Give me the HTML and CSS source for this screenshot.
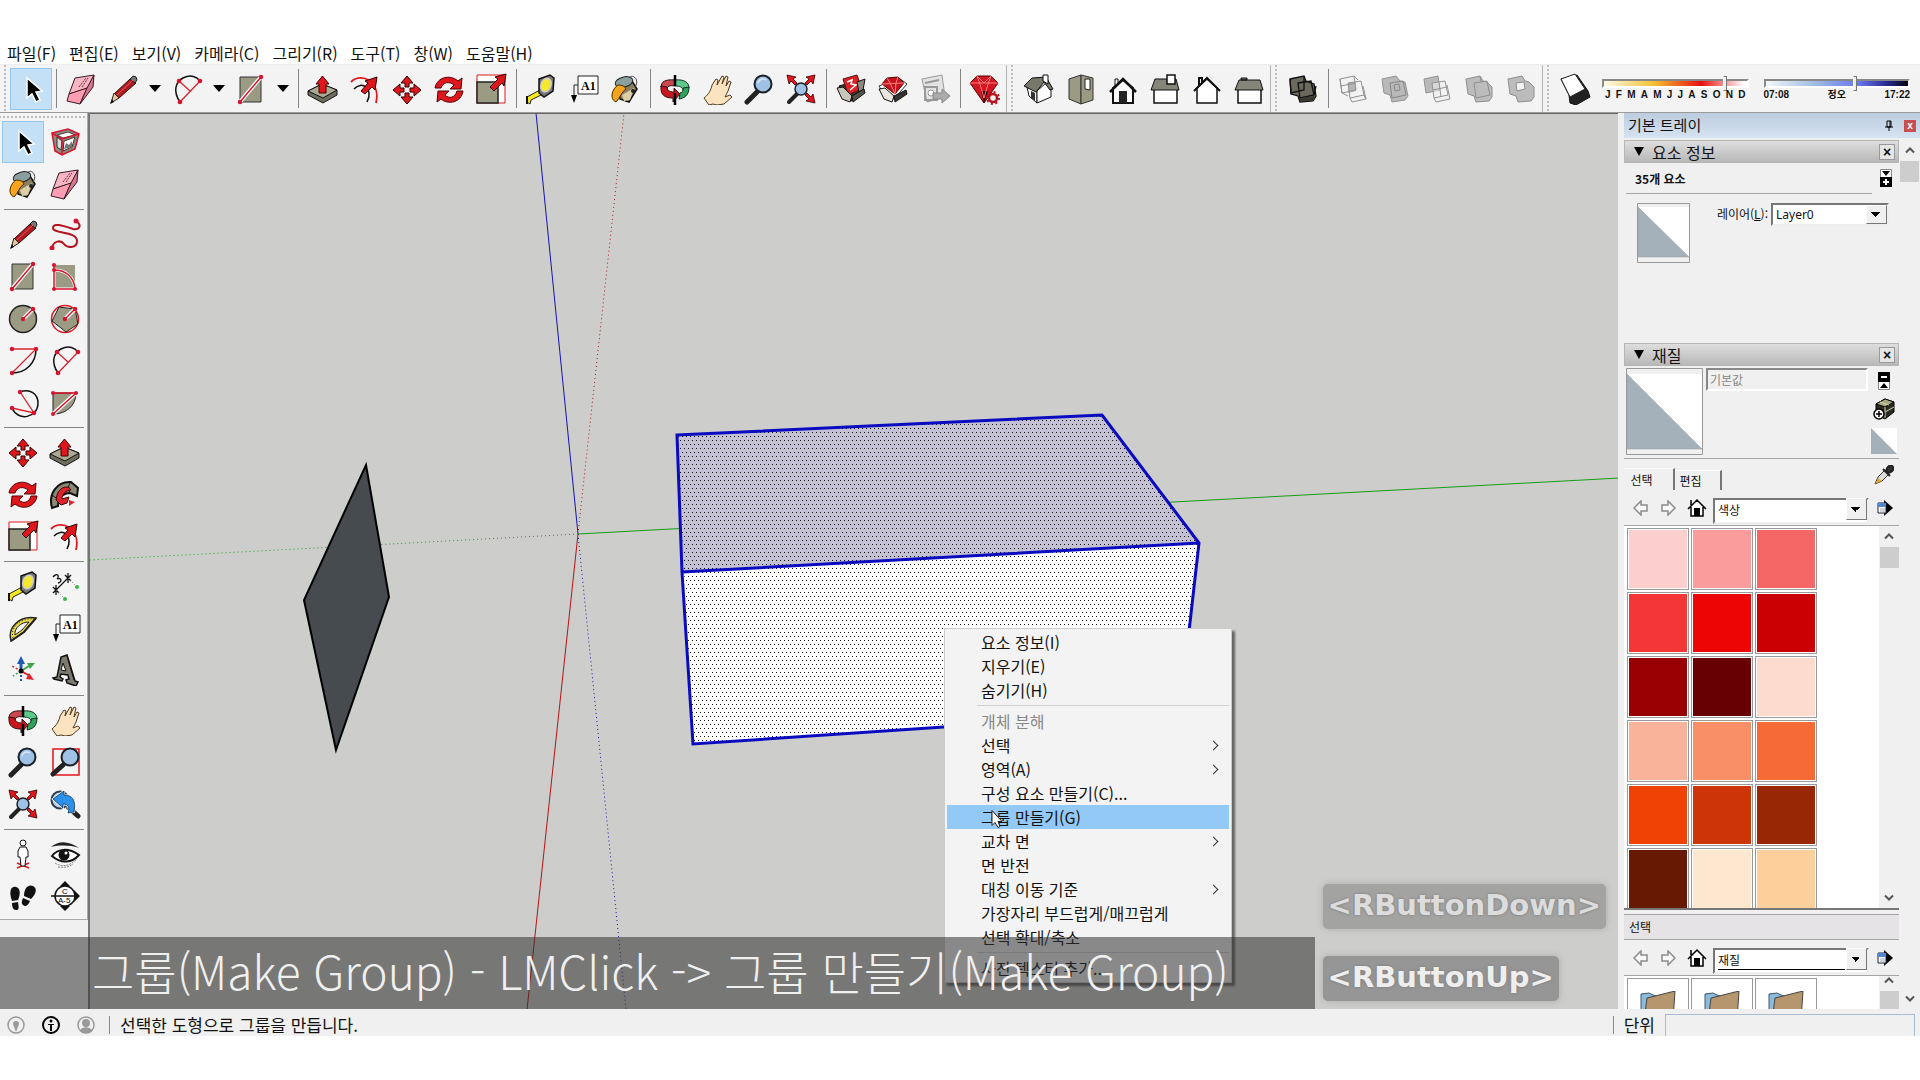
FILE: index.html
```html
<!DOCTYPE html>
<html lang="ko">
<head>
    <meta charset="UTF-8">
    <meta name="viewport" content="width=device-width, initial-scale=1.0">
    <title>SketchUp</title>
    <link rel="stylesheet" href="styles.css">
</head>
<body>
    <!-- Icon sprite -->
    <svg class="sprite" aria-hidden="true">
        <symbol id="i-select" viewBox="0 0 32 32">
            <path d="M12 5v20l5-4 4 8 4-2-4-8 6-1z" fill="#000" stroke="#fff" stroke-width="1.5"/>
        </symbol>
        <symbol id="i-eraser" viewBox="0 0 32 32">
            <path d="M10 5l19-3-6 13-19 6z" fill="#f8b5c4" stroke="#3a1a22"/>
            <path d="M4 21l18-6-7 16-13-3z" fill="#ff9db4" stroke="#3a1a22"/>
            <path d="M29 2l-1 12-13 17 7-16z" fill="#d8768c" stroke="#3a1a22"/>
            <path d="M14 14l7-9M17 14l6-9" stroke="#6d2c3c" stroke-dasharray="2 1"/>
        </symbol>
        <symbol id="i-pencil" viewBox="0 0 32 32">
            <path d="M23 6l6 4L12 25l-5-4z" fill="#b01c22" stroke="#2a0a0a"/>
            <path d="M23 6l3-3q4 0 4 4l-2 3z" fill="#777" stroke="#222"/>
            <path d="M7 20l5 5-8 5z" fill="#e9c79a" stroke="#222"/>
            <path d="M5 26l-2 5 4-2z" fill="#111"/>
            <path d="M10 22L26 7" stroke="#ea5a5a"/>
        </symbol>
        <symbol id="i-arc2" viewBox="0 0 32 32">
            <path d="M9 29C2 19 4 9 12 5s14-1 17 3" fill="none" stroke="#111" stroke-width="1.5"/>
            <path d="M9 29L29 8M8 8l11 10" stroke="#d8232e" stroke-width="1.3"/>
            <g fill="#d8132e"><circle cx="9" cy="29" r="2.3"/><circle cx="29" cy="8" r="2.3"/><circle cx="8" cy="8" r="2.3"/></g>
        </symbol>
        <symbol id="i-rect" viewBox="0 0 32 32">
            <path d="M5 4h21v25H5z" fill="#9b9b84" stroke="#333"/>
            <path d="M5 29L26 4" stroke="#fff" stroke-width="4"/>
            <path d="M5 29L26 4" stroke="#d8132e" stroke-width="1.5"/>
            <g fill="#d8132e"><circle cx="5" cy="29" r="2.2"/><circle cx="26" cy="4" r="2.2"/></g>
        </symbol>
        <symbol id="i-pushpull" viewBox="0 0 32 32">
            <path d="M1 18l14-7 15 6v5L16 30 1 22z" fill="#6e6e5c" stroke="#111"/>
            <path d="M1 18l14-7 15 6-14 8z" fill="#a9a994" stroke="#111"/>
            <path d="M12 20v-9H9l6.500-8 6.500 8h-3v9z" fill="#e0161d" stroke="#400"/>
        </symbol>
        <symbol id="i-offset" viewBox="0 0 32 32">
            <path d="M2 9C12-1 32 8 27 30" fill="none" stroke="#e0161d" stroke-width="1.800"/>
            <path d="M5 16c8-9 20 0 13 13" fill="none" stroke="#111" stroke-width="1.500"/>
            <path d="M12 18l7-8-3-2 12-4-2 13-3-3-7 7z" fill="#e0161d" stroke="#300"/>
        </symbol>
        <symbol id="i-move" viewBox="0 0 32 32">
            <g fill="#e0161d" stroke="#300">
                <path id="mv" d="M14 14v-4h-4l6-7 6 7h-4v4z"/>
                <use href="#mv" transform="rotate(90 16 17)"/>
                <use href="#mv" transform="rotate(180 16 17)"/>
                <use href="#mv" transform="rotate(270 16 17)"/>
            </g>
        </symbol>
        <symbol id="i-rotate" viewBox="0 0 32 32">
            <g fill="#e0161d" stroke="#500">
                <path d="M2 15C4 4 17 1 25 8l4-3-1 11H17l4-4c-5-4-11-3-13 3z"/>
                <path d="M30 18C28 30 15 32 8 26l-4 3 1-11h11l-4 4c4 4 10 3 12-4z"/>
            </g>
        </symbol>
        <symbol id="i-scale" viewBox="0 0 32 32">
            <path d="M2 2h28v28H2z" fill="#fff" stroke="#e0161d"/>
            <path d="M2 9h21v21H2z" fill="#9b9b84" stroke="#222" stroke-width="1.500"/>
            <path d="M15 14l8-8-3-2 11-3-2 12-2-3-8 8z" fill="#e0161d" stroke="#300"/>
        </symbol>
        <symbol id="i-tape" viewBox="0 0 32 32">
            <path d="M2 24l13-7 3 4-12 6-1 4-3-2z" fill="#f7ea1c" stroke="#222"/>
            <path d="M14 6l11-4 4 3-1 13-9 6-5-4z" fill="#777" stroke="#111" stroke-width="1.500"/>
            <ellipse cx="21" cy="12" rx="5" ry="7" fill="#f4e92a" stroke="#ccc" stroke-width="1.500" transform="rotate(20 21 12)"/>
            <path d="M2 23v8" stroke="#111" stroke-width="2"/>
        </symbol>
        <symbol id="i-text" viewBox="0 0 32 32">
            <path d="M11 3h20v18H11z" fill="#fff" stroke="#222"/>
            <path d="M11 12H7v12" fill="none" stroke="#222"/>
            <path d="M4 22h6l-3 8z" fill="#000"/>
            <text x="14" y="17" class="icon-text">A1</text>
        </symbol>
        <symbol id="i-paint" viewBox="0 0 32 32">
            <path d="M9 7l14 1 5 8-8 13-9-3z" fill="#8b7f62" stroke="#111" stroke-width="1.500"/>
            <path d="M13 22l12-7-4 12-6 1z" fill="#dccfa6"/>
            <path d="M20 5c4-5 11 2 6 9" fill="none" stroke="#444"/>
            <ellipse cx="15" cy="9" rx="9" ry="5" fill="#8ba09e" stroke="#222" transform="rotate(-15 15 9)"/>
            <path d="M9 12c4 0 7 1 8 4-5 3-5 8-10 13-7-3-4-13 2-17z" fill="#f6a41c" stroke="#4b2e00"/>
            <circle cx="24" cy="18" r="2" fill="#222"/>
        </symbol>
        <symbol id="i-orbit" viewBox="0 0 32 32">
            <path d="M16 7C6 6 2 9 2 14l6 3c0-4 3-5 8-4z" fill="#c84a4e" stroke="#311"/>
            <path d="M16 7c10-1 14 3 14 8l-6 3c0-4-3-5-8-5z" fill="#5cc98a" stroke="#132"/>
            <path d="M2 13c-1 10 5 12 12 12v4l7-8-6-6v4c-5 0-7-2-7-5z" fill="#c8161e" stroke="#311"/>
            <path d="M30 14c0 9-5 11-10 12l1-6c3-1 4-3 3-5z" fill="#2fa35c" stroke="#132"/>
            <path d="M16 2v11M16 20v12" stroke="#000" stroke-width="2.500"/>
        </symbol>
        <symbol id="i-pan" viewBox="0 0 32 32">
            <path d="M3 25c5-4 7-8 8-13l4-6 2 1-1 5 5-9 2 1-2 7 4-8 2 1-2 9 3-5 2 1-3 9-3 6 5-2 2 2-8 7-7 1-4-1-4 1z" fill="#fbe3bf" stroke="#4e3a20" stroke-linejoin="round"/>
        </symbol>
        <symbol id="i-zoom" viewBox="0 0 32 32">
            <path d="M4 29l10-10" stroke="#222" stroke-width="5" stroke-linecap="round"/>
            <circle cx="20" cy="11" r="8.500" fill="#9fc1e6" stroke="#1b1f26" stroke-width="2"/>
            <path d="M15 10c1-4 5-5 8-3" fill="none" stroke="#d9e9fa" stroke-width="1.500"/>
        </symbol>
        <symbol id="i-zoomwin" viewBox="0 0 32 32">
            <path d="M4 3h26v26H4z" fill="none" stroke="#e0161d" stroke-width="1.500"/>
            <path d="M4 28l10-9" stroke="#222" stroke-width="5" stroke-linecap="round"/>
            <circle cx="21" cy="11" r="8.500" fill="#9fc1e6" stroke="#1b1f26" stroke-width="2"/>
        </symbol>
        <symbol id="i-extents" viewBox="0 0 32 32">
            <path d="M4 29l8-8" stroke="#222" stroke-width="4" stroke-linecap="round"/>
            <circle cx="16" cy="16" r="6" fill="#9fc1e6" stroke="#1b1f26" stroke-width="1.500"/>
            <g fill="#e0161d" stroke="#300" stroke-width=".8">
                <path d="M2 2l9 2-3 2 4 4-2 2-4-4-2 3z"/>
                <path d="M30 2l-9 2 3 2-4 4 2 2 4-4 2 3z"/>
                <path d="M30 30l-9-2 3-2-4-4 2-2 4 4 2-3z"/>
            </g>
        </symbol>
        <symbol id="i-prev" viewBox="0 0 32 32">
            <path d="M20 20l9 8" stroke="#222" stroke-width="5" stroke-linecap="round"/>
            <circle cx="11" cy="12" r="8.500" fill="#c3d3e2" stroke="#2b3e56" stroke-width="2"/>
            <path d="M4 11l11-8v4c9 0 12 6 10 17l-6 1c2-6 0-9-5-9v4z" fill="#2c8fe8" stroke="#fff" stroke-width="2"/>
            <path d="M4 11l11-8v4c9 0 12 6 10 17l-6 1c2-6 0-9-5-9v4z" fill="#2c8fe8" stroke="#0d365f" stroke-width=".8"/>
        </symbol>
        <symbol id="i-box-red" viewBox="0 0 32 32">
            <path d="M4 13l17-5 8 9-12 11-9-3z" fill="#3d3a34" stroke="#111"/>
            <path d="M8 6l14-4 5 14-14 6z" fill="#dd2226" stroke="#511"/>
            <path d="M12 9l5-2-1 4 5 1-6 5" fill="none" stroke="#fff" stroke-width="1.500"/>
            <path d="M22 9l8-3-2 11-4 2z" fill="#8d897e" stroke="#111"/>
            <path d="M2 15l6-1 9 9-2 6-8-3z" fill="#c9c5ba" stroke="#111"/>
            <path d="M17 23l12-7 1 4-12 9z" fill="#55524a" stroke="#111"/>
        </symbol>
        <symbol id="i-box-gem" viewBox="0 0 32 32">
            <path d="M2 13l20-8 8 6-13 15-9-3z" fill="#fff" stroke="#333"/>
            <path d="M5 11l5-6 11-1 6 6-9 11z" fill="#c5121b" stroke="#500"/>
            <path d="M5 11l22-1M10 5l3 5 5 11M21 4l-2 6-1 11" fill="none" stroke="#ff8083"/>
            <path d="M2 16l6-1 9 8-2 6-8-3z" fill="#e8e5df" stroke="#111"/>
            <path d="M17 23l12-6 1 4-12 8z" fill="#37342f" stroke="#111"/>
        </symbol>
        <symbol id="i-layout" viewBox="0 0 32 32">
            <path d="M3 6l20-4 3 22-18 5z" fill="#e3e3e3" stroke="#9a9a9a"/>
            <path d="M6 10l14-3M6 14h12v13H6z" fill="none" stroke="#9a9a9a" stroke-width="2"/>
            <circle cx="12" cy="20" r="3" fill="#fff" stroke="#9a9a9a"/>
            <path d="M14 20h9v-4l8 7-8 7v-4h-9z" fill="#ababab" stroke="#888"/>
        </symbol>
        <symbol id="i-ruby" viewBox="0 0 32 32">
            <path d="M1 10l7-7h14l7 7-14 20z" fill="#d3161f" stroke="#500"/>
            <path d="M15 30l-3-12h7z" fill="#3a0206"/>
            <path d="M1 10h28M8 3l3 8 4 14M22 3l-3 8-4 14M8 3l7 7 7-7" fill="none" stroke="#ff7d80"/>
            <circle cx="24" cy="25" r="4" fill="#f3f3f3" stroke="#b5121c" stroke-width="2.500"/>
            <circle cx="24" cy="25" r="6" fill="none" stroke="#b5121c" stroke-width="2" stroke-dasharray="2 2.700"/>
        </symbol>
        <symbol id="i-iso" viewBox="0 0 32 32">
            <path d="M4 14l10 2v14l-8-7z" fill="#fff" stroke="#111"/>
            <path d="M14 18l9-8 5 5v9l-14 6z" fill="#fff" stroke="#111"/>
            <path d="M1 13L9 5l14-1 7 12-3 1-6-8-8 10z" fill="#77776a" stroke="#111"/>
            <path d="M8 18l4 2v8l-4-3z" fill="#333"/>
            <path d="M20 2h5v9l-5-3z" fill="#fff" stroke="#111"/>
        </symbol>
        <symbol id="i-top" viewBox="0 0 32 32">
            <path d="M4 6l12-4v29L4 26z" fill="#9b9b84" stroke="#333"/>
            <path d="M16 2l12 3v22l-12 4z" fill="#9b9b84" stroke="#333"/>
            <path d="M20 6h5v11l-5-1z" fill="#fff" stroke="#222"/>
        </symbol>
        <symbol id="i-front" viewBox="0 0 32 32">
            <path d="M8 6h3v7H8z" fill="#fff" stroke="#111"/>
            <path d="M6 15L16 7l10 8v15H6z" fill="#fff" stroke="#111" stroke-width="2"/>
            <path d="M3 19L16 6l13 13" fill="none" stroke="#111" stroke-width="2.500"/>
            <path d="M12 18h8v12h-8z" fill="#222"/>
        </symbol>
        <symbol id="i-right" viewBox="0 0 32 32">
            <path d="M5 16h23v14H5z" fill="#fff" stroke="#111" stroke-width="1.500"/>
            <path d="M6 6h21l3 11H2z" fill="#85857a" stroke="#111"/>
            <path d="M18 2h8v9h-8z" fill="#fff" stroke="#111" stroke-width="1.500"/>
        </symbol>
        <symbol id="i-back" viewBox="0 0 32 32">
            <path d="M6 15L16 6l10 9v15H6z" fill="#fff" stroke="#111" stroke-width="1.500"/>
            <path d="M3 18L16 5l13 13M8 13V5h3v5" fill="none" stroke="#111" stroke-width="2"/>
        </symbol>
        <symbol id="i-left" viewBox="0 0 32 32">
            <path d="M5 16h23v14H5z" fill="#fff" stroke="#111" stroke-width="1.500"/>
            <path d="M6 7h21l3 10H2zM8 5h6v2H8z" fill="#85857a" stroke="#111"/>
        </symbol>
        <symbol id="i-solid" viewBox="0 0 32 32">
            <path d="M3 6l14-3 2 5 8 3 2 12-3 5-13 1-2-6-7-2z" fill="#6c6a5c" stroke="#111" stroke-width="1.300"/>
            <path d="M3 6l1 14 13-3L17 3M11 10l13-2 3 14-14 3zM27 22l2-9" fill="none" stroke="#111" stroke-width="1.300"/>
            <path d="M13 25l14-2 1 4-15 2z" fill="#393830"/>
        </symbol>
        <symbol id="i-solid-a" viewBox="0 0 32 32">
            <path d="M11 10l8-1v9l-8 2z" fill="#b5b5b5"/>
            <path d="M3 6l14-3 2 14-14 3zM11 10l13-2 3 14-14 3zM13 25l2 4 14-3-2-4 2 4-3-13M3 6l2 14 6 3M17 3l4 4M4 13l14-3" fill="none" stroke="#929292"/>
        </symbol>
        <symbol id="i-solid-b" viewBox="0 0 32 32">
            <path d="M3 6l14-3 4 5 5 1 3 14-3 4-13 2-2-7-6-2z" fill="#b9b9b9" stroke="#929292"/>
            <path d="M11 10l13-2 3 14-14 3zM15 12l5-1 1 6-5 1z" fill="none" stroke="#888"/>
        </symbol>
        <symbol id="i-solid-c" viewBox="0 0 32 32">
            <path d="M3 6l14-3 2 14-14 3z" fill="#b9b9b9" stroke="#929292"/>
            <path d="M11 10l13-2 3 14-14 3zM13 25l2 4 14-3-3-14M12 17l14-3M18 9l2 15" fill="#efefef" fill-opacity=".6" stroke="#929292"/>
        </symbol>
        <symbol id="i-solid-d" viewBox="0 0 32 32">
            <path d="M3 6l14-3 3 5 4 1 5 5 0 10-3 4-13 1-2-6-6-2z" fill="#bcbcbc" stroke="#8e8e8e"/>
            <path d="M11 10l13-2 3 14-14 3zM17 3l1 6" fill="none" stroke="#8e8e8e"/>
        </symbol>
        <symbol id="i-solid-e" viewBox="0 0 32 32">
            <path d="M3 6l14-3 3 5 4 1 5 5 0 10-3 4-13 1-2-6-6-2z" fill="#bcbcbc" stroke="#8e8e8e"/>
            <path d="M11 10l8-1 1 7-8 2z" fill="#f3f3f3" stroke="#8e8e8e"/>
        </symbol>
        <symbol id="i-shadow" viewBox="0 0 32 32">
            <path d="M2 6l8 16 1 8 6 2 14-8-2-6-11-16z" fill="#222" stroke="#111"/>
            <path d="M2 6l14-5 10 15-15 8z" fill="#fff" stroke="#222"/>
        </symbol>
        <symbol id="i-component" viewBox="0 0 32 32">
            <path d="M3 7l16-4 11 5-4 15-13 6-7-4z" fill="#8c8c7c" stroke="#d8132e" stroke-width="1.500"/>
            <path d="M8 9l11-3 7 3-12 3z" fill="#fff" stroke="#444"/>
            <path d="M8 11l5 4-1 9-4-3z" fill="#ddd" stroke="#333"/>
            <path d="M15 15l11-4-3 10-9 4z" fill="#fff" stroke="#333"/>
            <path d="M15 23l2-6 3 2 3-4v6z" fill="#777"/>
            <path d="M3 7l10 6 17-5M13 13v16" fill="none" stroke="#d8132e" stroke-width="1.500"/>
        </symbol>
        <symbol id="i-free" viewBox="0 0 32 32">
            <path d="M27 3c6 4 4 9-3 8C15 8 4 4 4 10c0 6 24 3 24 13 0 8-10 7-13 3s-11-4-12 5" fill="none" stroke="#b3131c" stroke-width="2"/>
            <g fill="#d8132e"><circle cx="27" cy="3" r="2.500"/><circle cx="3" cy="30" r="2.500"/></g>
        </symbol>
        <symbol id="i-rotrect" viewBox="0 0 32 32">
            <path d="M6 5h20v24H6z" fill="#9b9b84"/>
            <path d="M5 10c12 0 20 7 21 19H5z" fill="#9b9b84" stroke="#fff" stroke-width="3"/>
            <path d="M5 4v25h21c-1-12-9-19-21-19" fill="none" stroke="#d8132e" stroke-width="1.500"/>
            <g fill="#d8132e"><circle cx="5" cy="5" r="2"/><circle cx="5" cy="10" r="2"/><circle cx="5" cy="29" r="2"/><circle cx="26" cy="29" r="2"/></g>
        </symbol>
        <symbol id="i-circle" viewBox="0 0 32 32">
            <circle cx="16" cy="17" r="13.500" fill="#9b9b84" stroke="#222" stroke-width="1.500"/>
            <path d="M16 17L26 7" stroke="#fff" stroke-width="4"/>
            <path d="M16 17L26 7" stroke="#d8132e" stroke-width="1.500"/>
            <g fill="#d8132e"><circle cx="16" cy="17" r="2.200"/><circle cx="26" cy="7" r="2.200"/></g>
        </symbol>
        <symbol id="i-polygon" viewBox="0 0 32 32">
            <circle cx="16" cy="17" r="13.500" fill="#fff" stroke="#e0161d" stroke-width="1.500"/>
            <path d="M10 5l16 2 3 15-12 8L3 19z" fill="#9b9b84" stroke="#222"/>
            <path d="M16 17L26 7" stroke="#fff" stroke-width="4"/>
            <path d="M16 17L26 7" stroke="#d8132e" stroke-width="1.500"/>
            <g fill="#d8132e"><circle cx="16" cy="17" r="2.200"/><circle cx="26" cy="7" r="2.200"/></g>
        </symbol>
        <symbol id="i-arc" viewBox="0 0 32 32">
            <path d="M29 5c0 14-10 24-24 24" fill="none" stroke="#111" stroke-width="1.500"/>
            <path d="M5 5h24L5 29" fill="none" stroke="#d8232e" stroke-width="1.300"/>
            <g fill="#d8132e"><circle cx="5" cy="5" r="2.200"/><circle cx="29" cy="5" r="2.200"/><circle cx="5" cy="29" r="2.200"/></g>
        </symbol>
        <symbol id="i-arc3" viewBox="0 0 32 32">
            <path d="M13 6c10-4 18 2 18 11 0 15-20 19-26 5" fill="none" stroke="#111" stroke-width="1.500"/>
            <path d="M13 6l14 21L5 22" fill="none" stroke="#d8232e" stroke-width="1.300"/>
            <g fill="#d8132e"><circle cx="13" cy="6" r="2.200"/><circle cx="27" cy="27" r="2.200"/><circle cx="5" cy="22" r="2.200"/></g>
        </symbol>
        <symbol id="i-pie" viewBox="0 0 32 32">
            <path d="M4 7h23c0 12-9 21-23 21z" fill="#9b9b84" stroke="#222"/>
            <path d="M4 28L27 7" stroke="#fff" stroke-width="4"/>
            <path d="M4 7h23L4 28" fill="none" stroke="#d8132e" stroke-width="1.500"/>
            <g fill="#d8132e"><circle cx="4" cy="7" r="2"/><circle cx="27" cy="7" r="2"/><circle cx="4" cy="28" r="2"/></g>
        </symbol>
        <symbol id="i-follow" viewBox="0 0 32 32">
            <path d="M3 30C-1 16 8 3 22 4l7 6-1 8-7-3c-8 0-12 6-12 13z" fill="#8a8a7a" stroke="#111" stroke-width="2"/>
            <path d="M22 4c-3 3-3 7-1 11M3 17l7 5" fill="none" stroke="#111"/>
            <path d="M8 17c3-9 12-10 14-5-5 0-9 4-9 9l7-2-2 6-6 2-5-5z" fill="#e0242b" stroke="#400"/>
            <path d="M20 22l6 2-6 4z" fill="#e0242b"/>
        </symbol>
        <symbol id="i-dim" viewBox="0 0 32 32">
            <path d="M7 20L19 8M4 17l6 6M16 5l6 6M7 15v10M19 3v10M10 17l-6 6M22 5l-6 6" stroke="#111" stroke-width="1.300"/>
            <path d="M7 20l9 9M19 8l9 9" stroke="#777" stroke-dasharray="1 2"/>
            <g fill="#3bb54a"><circle cx="16" cy="29" r="2"/><circle cx="28" cy="17" r="2"/></g>
            <path d="M4 7c4-5 7-1 4 2 4-2 6 3 1 4" fill="none" stroke="#111" stroke-width="1.300"/>
        </symbol>
        <symbol id="i-protractor" viewBox="0 0 32 32">
            <path d="M4 29C0 16 12 3 29 6L17 20z" fill="#e8d84b" stroke="#222" stroke-width="1.500"/>
            <path d="M8 23c-1-7 6-13 14-13l-7 8z" fill="#f3f3f3" stroke="#222"/>
            <path d="M4 29l13-9 12-14" fill="none" stroke="#222" stroke-width="2"/>
            <path d="M6 26C3 15 13 6 26 7" fill="none" stroke="#222" stroke-dasharray="1 2"/>
        </symbol>
        <symbol id="i-axes" viewBox="0 0 32 32">
            <path d="M14 17V8" stroke="#1f5ab0" stroke-width="3"/><path d="M10 10l4-8 4 8z" fill="#1f5ab0"/>
            <path d="M14 17l8-5" stroke="#3fa648" stroke-width="2"/><path d="M20 9l8 0-5 6z" fill="#3fa648"/>
            <path d="M14 17l9 5" stroke="#d8232e" stroke-width="2"/><path d="M19 25l8 1-5-7z" fill="#d8232e"/>
            <path d="M14 17v11" stroke="#1f5ab0" stroke-width="2" stroke-dasharray="2 2"/>
            <path d="M14 17l-9-5" stroke="#d8232e" stroke-width="1.500" stroke-dasharray="2 2"/>
            <path d="M14 17l-8 5" stroke="#3fa648" stroke-width="1.500" stroke-dasharray="2 2"/>
            <circle cx="14" cy="17" r="2.500"/>
        </symbol>
        <symbol id="i-3dtext" viewBox="0 0 32 32">
            <path d="M4 24l4-1 4-20 6-2 8 26 3 1-2 4-9-3-1-3 3-1-1-4-7-1-1 3 3 2-1 2-8-2z" fill="#7c7b6e" stroke="#111" stroke-width="1.500"/>
            <path d="M14 9l3 8-5-1zM18 2l7 24" fill="#f3f3f3" stroke="#111"/>
        </symbol>
        <symbol id="i-person" viewBox="0 0 32 32">
            <path d="M10 25l12 5M22 25l-12 5" stroke="#e0161d" stroke-width="1.500"/>
            <circle cx="16" cy="5" r="3" fill="#fff" stroke="#111"/>
            <path d="M13 9h6l2 4v6h-2l-1 9h-4l-1-9h-2v-6z" fill="#fff" stroke="#111"/>
        </symbol>
        <symbol id="i-eye" viewBox="0 0 32 32">
            <path d="M2 9c8-7 18-6 28 1-9-3-19-3-28-1z" fill="#222"/>
            <path d="M3 18c6-8 17-8 27-1-7 8-18 9-27 1z" fill="#fff" stroke="#111" stroke-width="2"/>
            <circle cx="15" cy="17" r="5.500" fill="#111"/>
            <circle cx="17" cy="15" r="1.500" fill="#fff"/>
            <path d="M6 25c6 4 14 4 22-4M9 29c6 1 11 0 15-3" fill="none" stroke="#888" stroke-dasharray="2 1"/>
        </symbol>
        <symbol id="i-feet" viewBox="0 0 32 32">
            <path d="M5 21C1 10 5 6 9 7s5 6 2 13z" fill="#111"/><path d="M5 23l6-1c1 7 1 8-2 8s-4-3-4-7z" fill="#111"/>
            <path d="M17 16c0-9 5-12 9-10s4 7-2 13z" fill="#111"/><path d="M16 18l7 3c-2 5-5 6-7 4s-1-4 0-7z" fill="#111"/>
        </symbol>
        <symbol id="i-section" viewBox="0 0 32 32">
            <path d="M16 1l5 5h-10zM16 31l5-5h-10zM31 16l-6-6v12z" fill="#111"/>
            <circle cx="16" cy="16" r="10" fill="#fff" stroke="#111" stroke-width="1.500"/>
            <path d="M2 16h28" stroke="#111" stroke-width="1.500"/>
            <text x="13" y="14" class="icon-tiny">C</text>
            <text x="9" y="23" class="icon-tiny">A-5</text>
        </symbol>
        <symbol id="i-arrow-l" viewBox="0 0 16 16"><path d="M1 8l7-7v4h6v6H8v4z" fill="#f8f8f8" stroke="#8c8c8c" stroke-width="1.500"/></symbol>
        <symbol id="i-arrow-r" viewBox="0 0 16 16"><path d="M15 8L8 1v4H2v6h6v4z" fill="#f8f8f8" stroke="#8c8c8c" stroke-width="1.500"/></symbol>
        <symbol id="i-home" viewBox="0 0 20 20">
            <path d="M4 10l6-6 6 6v8H4z" fill="#fff"/>
            <path d="M1 11L10 2l9 9M4 9v9h12V9M4 7V2" fill="none" stroke="#000" stroke-width="1.500"/>
            <path d="M7 10h6v8H7z"/>
        </symbol>
        <symbol id="i-detail" viewBox="0 0 16 16">
            <path d="M7 0l9 8-9 8z"/>
            <path d="M1 3h8v10H1z" fill="#fff" stroke="#223"/><path d="M1 3h8v4H1z" fill="#4f86cc"/><path d="M3 9h5M3 11h5" stroke="#9ab"/>
        </symbol>
        <symbol id="i-folder" viewBox="0 0 36 30">
            <path d="M1 3l8-1 4 2 4 1-4 25H1z" fill="#8cbbdb" stroke="#456"/>
            <path d="M7 7L35 0l-2 30H4z" fill="#b5966f" stroke="#444"/>
        </symbol>
        <symbol id="i-up" viewBox="0 0 12 12"><path d="M2 8l4-4 4 4" fill="none" stroke="#555" stroke-width="2"/></symbol>
        <symbol id="i-down" viewBox="0 0 12 12"><path d="M2 4l4 4 4-4" fill="none" stroke="#555" stroke-width="2"/></symbol>
    </svg>

    <div class="app">
        <nav class="menubar">
            <a href="#">파일(F)</a>
            <a href="#">편집(E)</a>
            <a href="#">보기(V)</a>
            <a href="#">카메라(C)</a>
            <a href="#">그리기(R)</a>
            <a href="#">도구(T)</a>
            <a href="#">창(W)</a>
            <a href="#">도움말(H)</a>
        </nav>

        <div class="toolbar">
            <div class="group">
                <button class="tool active" title="선택"><svg><use href="#i-select"/></svg></button>
                <span class="sep"></span>
                <button class="tool" title="지우개"><svg><use href="#i-eraser"/></svg></button>
                <button class="tool" title="선"><svg><use href="#i-pencil"/></svg></button>
                <button class="caret" title="선 도구"></button>
                <button class="tool" title="호"><svg><use href="#i-arc2"/></svg></button>
                <button class="caret" title="호 도구"></button>
                <button class="tool" title="직사각형"><svg><use href="#i-rect"/></svg></button>
                <button class="caret" title="도형 도구"></button>
                <span class="sep"></span>
                <button class="tool" title="밀기/끌기"><svg><use href="#i-pushpull"/></svg></button>
                <button class="tool" title="오프셋"><svg><use href="#i-offset"/></svg></button>
                <button class="tool" title="이동"><svg><use href="#i-move"/></svg></button>
                <button class="tool" title="회전"><svg><use href="#i-rotate"/></svg></button>
                <button class="tool" title="배율"><svg><use href="#i-scale"/></svg></button>
                <span class="sep"></span>
                <button class="tool" title="줄자"><svg><use href="#i-tape"/></svg></button>
                <button class="tool" title="텍스트"><svg><use href="#i-text"/></svg></button>
                <button class="tool" title="페인트통"><svg><use href="#i-paint"/></svg></button>
                <span class="sep"></span>
                <button class="tool" title="궤도"><svg><use href="#i-orbit"/></svg></button>
                <button class="tool" title="이동 보기"><svg><use href="#i-pan"/></svg></button>
                <button class="tool" title="확대/축소"><svg><use href="#i-zoom"/></svg></button>
                <button class="tool" title="범위 확대"><svg><use href="#i-extents"/></svg></button>
                <span class="sep"></span>
                <button class="tool" title="3D Warehouse"><svg><use href="#i-box-red"/></svg></button>
                <button class="tool" title="Extension Warehouse"><svg><use href="#i-box-gem"/></svg></button>
                <button class="tool" title="LayOut"><svg><use href="#i-layout"/></svg></button>
                <span class="sep"></span>
                <button class="tool" title="확장 관리자"><svg><use href="#i-ruby"/></svg></button>
            </div>
            <div class="group">
                <button class="tool" title="등각"><svg><use href="#i-iso"/></svg></button>
                <button class="tool" title="위"><svg><use href="#i-top"/></svg></button>
                <button class="tool" title="정면"><svg><use href="#i-front"/></svg></button>
                <button class="tool" title="오른쪽"><svg><use href="#i-right"/></svg></button>
                <button class="tool" title="뒤"><svg><use href="#i-back"/></svg></button>
                <button class="tool" title="왼쪽"><svg><use href="#i-left"/></svg></button>
            </div>
            <div class="group">
                <button class="tool" title="외부 셸"><svg><use href="#i-solid"/></svg></button>
                <span class="sep"></span>
                <button class="tool" title="교차"><svg><use href="#i-solid-a"/></svg></button>
                <button class="tool" title="결합"><svg><use href="#i-solid-b"/></svg></button>
                <button class="tool" title="빼기"><svg><use href="#i-solid-c"/></svg></button>
                <button class="tool" title="다듬기"><svg><use href="#i-solid-d"/></svg></button>
                <button class="tool" title="분할"><svg><use href="#i-solid-e"/></svg></button>
            </div>
            <div class="group shadows">
                <button class="tool" title="그림자"><svg><use href="#i-shadow"/></svg></button>
                <label class="slider">
                    <input class="range months" type="range" min="0" max="100" value="86" aria-label="날짜">
                    <span class="ticks"><i>J</i><i>F</i><i>M</i><i>A</i><i>M</i><i>J</i><i>J</i><i>A</i><i>S</i><i>O</i><i>N</i><i>D</i></span>
                </label>
                <label class="slider">
                    <input class="range hours" type="range" min="0" max="100" value="63" aria-label="시간">
                    <span class="ticks"><i>07:08</i><i>정오</i><i>17:22</i></span>
                </label>
            </div>
        </div>

        <main class="main">
            <aside class="toolbox">
                <div class="tools">
                    <button class="tool active" title="선택"><svg><use href="#i-select"/></svg></button>
                    <button class="tool" title="구성 요소"><svg><use href="#i-component"/></svg></button>
                    <button class="tool" title="페인트통"><svg><use href="#i-paint"/></svg></button>
                    <button class="tool" title="지우개"><svg><use href="#i-eraser"/></svg></button>
                    <span class="rule"></span>
                    <button class="tool" title="선"><svg><use href="#i-pencil"/></svg></button>
                    <button class="tool" title="자유 곡선"><svg><use href="#i-free"/></svg></button>
                    <button class="tool" title="직사각형"><svg><use href="#i-rect"/></svg></button>
                    <button class="tool" title="회전 직사각형"><svg><use href="#i-rotrect"/></svg></button>
                    <button class="tool" title="원"><svg><use href="#i-circle"/></svg></button>
                    <button class="tool" title="다각형"><svg><use href="#i-polygon"/></svg></button>
                    <button class="tool" title="호"><svg><use href="#i-arc"/></svg></button>
                    <button class="tool" title="2점 호"><svg><use href="#i-arc2"/></svg></button>
                    <button class="tool" title="3점 호"><svg><use href="#i-arc3"/></svg></button>
                    <button class="tool" title="파이"><svg><use href="#i-pie"/></svg></button>
                    <span class="rule"></span>
                    <button class="tool" title="이동"><svg><use href="#i-move"/></svg></button>
                    <button class="tool" title="밀기/끌기"><svg><use href="#i-pushpull"/></svg></button>
                    <button class="tool" title="회전"><svg><use href="#i-rotate"/></svg></button>
                    <button class="tool" title="따라가기"><svg><use href="#i-follow"/></svg></button>
                    <button class="tool" title="배율"><svg><use href="#i-scale"/></svg></button>
                    <button class="tool" title="오프셋"><svg><use href="#i-offset"/></svg></button>
                    <span class="rule"></span>
                    <button class="tool" title="줄자"><svg><use href="#i-tape"/></svg></button>
                    <button class="tool" title="치수"><svg><use href="#i-dim"/></svg></button>
                    <button class="tool" title="각도기"><svg><use href="#i-protractor"/></svg></button>
                    <button class="tool" title="텍스트"><svg><use href="#i-text"/></svg></button>
                    <button class="tool" title="축"><svg><use href="#i-axes"/></svg></button>
                    <button class="tool" title="3D 텍스트"><svg><use href="#i-3dtext"/></svg></button>
                    <span class="rule"></span>
                    <button class="tool" title="궤도"><svg><use href="#i-orbit"/></svg></button>
                    <button class="tool" title="이동 보기"><svg><use href="#i-pan"/></svg></button>
                    <button class="tool" title="확대/축소"><svg><use href="#i-zoom"/></svg></button>
                    <button class="tool" title="창 확대"><svg><use href="#i-zoomwin"/></svg></button>
                    <button class="tool" title="범위 확대"><svg><use href="#i-extents"/></svg></button>
                    <button class="tool" title="이전"><svg><use href="#i-prev"/></svg></button>
                    <span class="rule"></span>
                    <button class="tool" title="카메라 배치"><svg><use href="#i-person"/></svg></button>
                    <button class="tool" title="둘러보기"><svg><use href="#i-eye"/></svg></button>
                    <button class="tool" title="걷기"><svg><use href="#i-feet"/></svg></button>
                    <button class="tool" title="단면"><svg><use href="#i-section"/></svg></button>
                </div>
            </aside>

            <section class="viewport">
                <svg class="scene" viewBox="90 114 1528 895" preserveAspectRatio="xMinYMin slice">
                    <defs>
                        <pattern id="dots" width="4" height="8" patternUnits="userSpaceOnUse">
                            <path d="M0 0h1v1H0zM2 4h1v1H2z" fill="#111"/>
                        </pattern>
                    </defs>
                    <!-- Axes -->
                    <path d="M578 534L536 113" stroke="#1414b4"/>
                    <path d="M578 534L626 1010" stroke="#1414b4" stroke-dasharray="1 3"/>
                    <path d="M578 534L624 113" stroke="#b41414" stroke-dasharray="1 3"/>
                    <path d="M578 534L527 1010" stroke="#b41414"/>
                    <path d="M578 534L1620 478" stroke="#14a014"/>
                    <path d="M578 534L90 560" stroke="#14a014" stroke-dasharray="1 3"/>
                    <!-- Standing face -->
                    <path d="M366 465L389 597 336 750 304 600z" fill="#454b4f" stroke="#000" stroke-width="2"/>
                    <!-- Selected box -->
                    <path d="M677 435L1102 415 1199 543 682 572z" fill="#c3c1d3"/>
                    <path d="M682 572L1199 543 1180 711 693 744z" fill="#fff"/>
                    <path d="M677 435L1102 415 1199 543 1180 711 693 744z" fill="url(#dots)"/>
                    <path d="M677 435L1102 415 1199 543 1180 711 693 744 682 572zM682 572L1199 543" fill="none" stroke="#0a0ac0" stroke-width="3"/>
                </svg>

                <div class="context-menu">
                    <button>요소 정보(I)</button>
                    <button>지우기(E)</button>
                    <button>숨기기(H)</button>
                    <hr>
                    <button disabled>개체 분해</button>
                    <button class="sub">선택</button>
                    <button class="sub">영역(A)</button>
                    <button>구성 요소 만들기(C)...</button>
                    <button class="hover">그룹 만들기(G)</button>
                    <button class="sub">교차 면</button>
                    <button>면 반전</button>
                    <button class="sub">대칭 이동 기준</button>
                    <button>가장자리 부드럽게/매끄럽게</button>
                    <button>선택 확대/축소</button>
                    <hr>
                    <button>사진 텍스터 추가...</button>
                    <svg class="pointer" viewBox="0 0 12 19"><path d="M1 1v15l3-3 3 5 2-1-2-5h4z" fill="#fff" stroke="#222"/></svg>
                </div>

                <div class="keys">
                    <kbd class="faded">&lt;RButtonDown&gt;</kbd>
                    <kbd>&lt;RButtonUp&gt;</kbd>
                </div>
            </section>

            <aside class="tray">
                <header class="tray-title">
                    <span>기본 트레이</span>
                    <button class="pin" title="고정"><svg viewBox="0 0 10 12"><path d="M3 1h4v6H3zM1 7h8M5 7v4M6 1v6" fill="none" stroke="#000"/></svg></button>
                    <button class="close" title="닫기">x</button>
                </header>
                <div class="tray-body">
                    <div class="panels">
                        <h2 class="panel-head"><span class="tri"></span>요소 정보<button title="닫기">×</button></h2>
                        <section class="info">
                            <div class="info-top">
                                <b>35개 요소</b>
                                <svg class="expander" viewBox="0 0 12 18"><path d="M.5.500h11v17H.5z" fill="#fff" stroke="#888"/><path d="M2 2h8L6 7zM0 8h12v10H0z"/><path d="M3 13h6M6 10v6" stroke="#fff" stroke-width="2"/></svg>
                            </div>
                            <div class="info-row">
                                <svg class="material-sm" viewBox="0 0 53 60"><path d="M.5.500h52v59H.5z" fill="#f0f0f0" stroke="#999"/><path d="M1 4h51v50z" fill="#fff"/><path d="M1 4v50h51z" fill="#a5b1ba" stroke="#999" stroke-width=".5"/></svg>
                                <label for="layer">레이어(<u>L</u>):</label>
                                <span class="combo"><select id="layer"><option>Layer0</option></select></span>
                            </div>
                        </section>

                        <h2 class="panel-head"><span class="tri"></span>재질<button title="닫기">×</button></h2>
                        <section class="material">
                            <svg class="material-lg" viewBox="0 0 77 87"><path d="M.5.500h76v86H.5z" fill="#f0f0f0" stroke="#999"/><path d="M1 6h75v75z" fill="#fff"/><path d="M1 6v75h75z" fill="#a5b1ba" stroke="#999" stroke-width=".5"/></svg>
                            <input type="text" value="기본값" aria-label="재질 이름" disabled>
                            <div class="material-side">
                                <svg class="expander" viewBox="0 0 12 18"><path d="M.5.500h11v17H.5z" fill="#fff" stroke="#888"/><path d="M2 16h8L6 11zM0 0h12v10H0z"/><path d="M3 5h6" stroke="#fff" stroke-width="2"/></svg>
                                <svg class="add" viewBox="0 0 22 22"><path d="M3 6l9-5 9 3v10l-9 7-9-5z" fill="#2b2b22" stroke="#000"/><path d="M3 6l9-5 9 3-9 5z" fill="#a8a582" stroke="#000"/><path d="M7 4l9 3M12 9v11M12 14l9-5" stroke="#d6d3ac"/><circle cx="6" cy="16" r="5" fill="#fff" stroke="#000" stroke-width="1.500"/><path d="M3 16h6M6 13v6" stroke="#000" stroke-width="1.500"/></svg>
                                <svg class="thumb" viewBox="0 0 26 26"><path d="M0 0h26v26z" fill="#fff"/><path d="M0 0v26h26z" fill="#a5b1ba"/></svg>
                            </div>
                        </section>

                        <div class="tabs">
                            <button class="tab current">선택</button>
                            <button class="tab">편집</button>
                            <svg class="dropper" viewBox="0 0 20 20"><path d="M1 19l3-7 7-7 4 4-7 7z" fill="#ddd" stroke="#333"/><path d="M1 19l3-6 4 3z" fill="#e0a33a"/><path d="M9 4l7 7M12 6c1-5 5-7 7-4 1 3-1 5-5 6z" fill="#333" stroke="#222" stroke-width="2"/></svg>
                        </div>
                        <div class="nav-row">
                            <button title="뒤로"><svg><use href="#i-arrow-l"/></svg></button>
                            <button title="앞으로"><svg><use href="#i-arrow-r"/></svg></button>
                            <button class="home" title="모델 내"><svg><use href="#i-home"/></svg></button>
                            <span class="combo"><select aria-label="모음"><option>색상</option></select></span>
                            <button class="detail" title="세부 정보"><svg><use href="#i-detail"/></svg></button>
                        </div>
                        <div class="list swatches">
                            <div class="grid">
                                <button class="c1" title="색상 A01"></button><button class="c2" title="색상 A02"></button><button class="c3" title="색상 A03"></button>
                                <button class="c4" title="색상 A04"></button><button class="c5" title="색상 A05"></button><button class="c6" title="색상 A06"></button>
                                <button class="c7" title="색상 A07"></button><button class="c8" title="색상 A08"></button><button class="c9" title="색상 B01"></button>
                                <button class="c10" title="색상 B02"></button><button class="c11" title="색상 B03"></button><button class="c12" title="색상 B04"></button>
                                <button class="c13" title="색상 B05"></button><button class="c14" title="색상 B06"></button><button class="c15" title="색상 B07"></button>
                                <button class="c16" title="색상 B08"></button><button class="c17" title="색상 C01"></button><button class="c18" title="색상 C02"></button>
                            </div>
                            <div class="scroll"><svg><use href="#i-up"/></svg><span></span><svg class="end"><use href="#i-down"/></svg></div>
                        </div>

                        <div class="sub-head">선택</div>
                        <div class="nav-row">
                            <button title="뒤로"><svg><use href="#i-arrow-l"/></svg></button>
                            <button title="앞으로"><svg><use href="#i-arrow-r"/></svg></button>
                            <button class="home" title="모델 내"><svg><use href="#i-home"/></svg></button>
                            <span class="combo underlined"><select aria-label="재질 모음"><option>재질</option></select></span>
                            <button class="detail" title="세부 정보"><svg><use href="#i-detail"/></svg></button>
                        </div>
                        <div class="list folders">
                            <div class="grid">
                                <button title="폴더 1"><svg><use href="#i-folder"/></svg></button>
                                <button title="폴더 2"><svg><use href="#i-folder"/></svg></button>
                                <button title="폴더 3"><svg><use href="#i-folder"/></svg></button>
                            </div>
                            <div class="scroll"><svg><use href="#i-up"/></svg><span></span></div>
                        </div>
                    </div>
                    <div class="scroll outer"><svg><use href="#i-up"/></svg><span></span><svg class="end"><use href="#i-down"/></svg></div>
                </div>
            </aside>

            <p class="caption">그룹(Make Group) - LMClick -&gt; 그룹 만들기(Make Group)</p>
        </main>

        <footer class="status">
            <svg viewBox="0 0 20 20"><circle cx="10" cy="10" r="8" fill="none" stroke="#999" stroke-width="1.500"/><path d="M10 17L7 9a3 3 0 1 1 6 0z" fill="#999"/></svg>
            <svg viewBox="0 0 20 20"><circle cx="10" cy="10" r="8" fill="none" stroke="#000" stroke-width="2"/><circle cx="10" cy="6" r="1.500"/><path d="M7 9h6v1h-2v6H9v-6H7z"/></svg>
            <svg viewBox="0 0 20 20"><circle cx="10" cy="10" r="8" fill="none" stroke="#999" stroke-width="1.500"/><circle cx="10" cy="8" r="4" fill="#999"/><path d="M4 16c1-5 11-5 12 0-3 3-9 3-12 0z" fill="#999"/></svg>
            <span class="hint">선택한 도형으로 그룹을 만듭니다.</span>
            <label class="unit" for="measure">단위</label>
            <input id="measure" type="text">
        </footer>
    </div>
</body>
</html>
```

FILE: styles.css
```css
* {
    box-sizing: border-box;
}

body {
    margin: 0;
    background: #fff;
    color: #111;
    font-family: "Noto Sans CJK KR", "Noto Sans", sans-serif;
    font-size: 16px;
}

button {
    margin: 0;
    padding: 0;
    border: 0;
    background: none;
    color: inherit;
    font: inherit;
}

.sprite {
    display: none;
}

.app {
    display: flex;
    flex-direction: column;
    height: 100vh;
    padding: 40px 0 44px;
    overflow: hidden;
}

/* Menu bar */
.menubar {
    display: flex;
    gap: 13px;
    height: 24px;
    padding-left: 7px;
    line-height: 26px;
}

.menubar a {
    color: #111;
    text-decoration: none;
}

/* Top toolbar */
.toolbar {
    display: flex;
    height: 49px;
    border-top: 1px solid #ededed;
    border-bottom: 1px solid #9a9a9a;
    background: #f3f3f3;
}

.group {
    display: flex;
    align-items: center;
    padding-left: 10px;
    border-right: 1px solid #b5b5b5;
    background: linear-gradient(#bbb 50%, transparent 50%) 4px 4px / 2px 4px repeat-y;
}

.group + .group {
    padding-left: 11px;
}

.tool {
    display: flex;
    align-items: center;
    justify-content: center;
    width: 42px;
    height: 42px;
}

.tool svg {
    width: 32px;
    height: 32px;
}

.tool.active {
    border: 1px solid #93c7ee;
    background: #c4e0f7;
}

.icon-text {
    font: bold 12px "Liberation Serif", serif;
}

.icon-tiny {
    font: 8px "Liberation Sans", sans-serif;
}

.sep {
    width: 8px;
    height: 39px;
    background: linear-gradient(#858585, #858585) center / 1px 100% no-repeat;
}

.caret {
    width: 22px;
    height: 42px;
}

.caret::before {
    content: "";
    display: block;
    width: 0;
    margin: 0 auto;
    border: 6px solid transparent;
    border-top: 7px solid #000;
    border-bottom: 0;
}

.shadows {
    flex: 1;
    gap: 15px;
    padding-right: 10px;
    border-right: 0;
}

.shadows .tool {
    margin-right: -9px;
}

.slider {
    flex: 1;
}

.range {
    display: block;
    width: 100%;
    height: 9px;
    margin: 3px 0 0;
    border: 2px solid #888;
    border-right-color: #fff;
    border-bottom-color: #fff;
    appearance: none;
}

.range::-webkit-slider-thumb {
    width: 4px;
    height: 15px;
    border: 1px solid #777;
    border-left-color: #fff;
    background: #eee;
    appearance: none;
}

.months {
    background: linear-gradient(90deg, #fffbe8, #f2c030 35%, #e81010 68%, #fff 98%);
}

.hours {
    background: linear-gradient(90deg, #f4f8fc, #9dbbe0 35%, #6a78f0 65%, #2a2a90 85%, #05050f);
}

.ticks {
    display: flex;
    justify-content: space-between;
    padding: 0 3px;
    font: bold 10px/13px "Liberation Sans", "Noto Sans CJK KR", sans-serif;
}

.hours + .ticks {
    padding: 0;
}

.ticks i {
    font-style: normal;
}

/* Work area */
.main {
    position: relative;
    display: flex;
    flex: 1;
    min-height: 0;
    background: #f0f0f0;
}

.toolbox {
    width: 90px;
    overflow: hidden;
    border-right: 2px solid #777;
}

.tools {
    display: grid;
    grid-template-columns: 42px 42px;
    padding: 8px 0 2px 2px;
    border-right: 1px solid #aaa;
    border-bottom: 1px solid #aaa;
    background: linear-gradient(90deg, #bbb 50%, transparent 50%) 3px 3px / 4px 2px repeat-x, #f4f4f4;
}

.rule {
    grid-column: 1 / -1;
    height: 8px;
    margin: 0 2px;
    background: linear-gradient(#858585, #858585) center / 100% 1px no-repeat;
}

.viewport {
    position: relative;
    flex: 1;
    overflow: hidden;
    border-top: 1px solid #666;
    background: #cdcdcb;
}

.scene {
    display: block;
    width: 100%;
    height: 100%;
}

/* Context menu */
.context-menu {
    position: absolute;
    top: 514px;
    left: 854px;
    width: 288px;
    padding: 1px 2px 2px;
    border: 1px solid #ccc;
    background: #f3f3f3;
    box-shadow: 3px 3px 2px #666;
}

.context-menu button {
    display: block;
    width: 100%;
    height: 24px;
    padding: 0 12px 0 34px;
    line-height: 24px;
    text-align: left;
    white-space: nowrap;
}

.context-menu hr {
    height: 1px;
    margin: 3px 0 3px 30px;
    border: 0;
    background: #d2d2d2;
}

.context-menu button:disabled {
    color: #888;
}

.context-menu .hover {
    background: #93c9f7;
}

.context-menu .sub {
    display: flex;
    align-items: center;
    justify-content: space-between;
}

.context-menu .sub::after {
    content: "";
    width: 6px;
    height: 6px;
    border: 1px solid #333;
    border-width: 1px 1px 0 0;
    transform: rotate(45deg);
}

.pointer {
    position: absolute;
    top: 180px;
    left: 46px;
    width: 12px;
    height: 20px;
}

/* Keystroke badges */
.keys {
    position: absolute;
    right: 12px;
    bottom: 8px;
    display: flex;
    flex-direction: column;
    align-items: flex-start;
    gap: 27px;
}

.keys kbd {
    height: 45px;
    padding: 0 5px;
    border-radius: 5px;
    background: #969696;
    box-shadow: 0 0 6px #aaa;
    color: #eee;
    font: bold 29px/42px "DejaVu Sans", sans-serif;
    text-shadow: 0 0 3px #777;
}

.keys .faded {
    background: #a3a3a2;
    color: #dcdcdc;
}

/* Tray */
.tray {
    display: flex;
    flex-direction: column;
    width: 302px;
    padding-left: 6px;
    background: #f0f0f0;
}

.tray-title {
    display: flex;
    align-items: center;
    height: 25px;
    padding: 0 4px;
    background: linear-gradient(#bccddf, #d5e2f1);
    font-size: 15px;
    line-height: 22px;
}

.tray-title span {
    flex: 1;
    padding-bottom: 2px;
}

.pin {
    width: 10px;
    height: 12px;
    margin-right: 10px;
}

.pin svg {
    display: block;
}

.close {
    width: 12px;
    height: 12px;
    background: #c75050;
    color: #fff;
    font: bold 10px/10px "Liberation Sans", sans-serif;
}

.tray-body {
    display: flex;
    flex: 1;
    min-height: 0;
    padding-top: 2px;
}

.panels {
    display: flex;
    flex: 1;
    flex-direction: column;
    overflow: hidden;
}

.panel-head {
    display: flex;
    align-items: center;
    flex: none;
    height: 23px;
    margin: 0;
    padding: 0 3px 0 9px;
    border: 1px solid #b5b5b5;
    background: linear-gradient(#dedede, #b8b8b8);
    font-size: 16px;
    font-weight: 400;
    line-height: 20px;
}

.tri {
    margin-right: 8px;
    border: 5px solid transparent;
    border-top: 9px solid #000;
    border-bottom: 0;
}

.panel-head button {
    width: 16px;
    height: 16px;
    margin-left: auto;
    border: 1px solid #999;
    background: #e5e5e5;
    font: bold 14px/12px "Liberation Sans", sans-serif;
}

.info {
    flex: none;
    height: 180px;
    font-size: 12px;
}

.info-top {
    display: flex;
    align-items: center;
    justify-content: space-between;
    height: 31px;
    margin: 0 27px 0 2px;
    padding-left: 9px;
    border-bottom: 1px solid #a5a5a5;
}

.expander {
    flex: none;
    width: 12px;
    height: 18px;
}

.info-top .expander {
    margin-right: -20px;
}

.info-row {
    display: flex;
    align-items: flex-start;
    padding: 9px 10px 0 13px;
}

.material-sm {
    width: 53px;
    height: 60px;
}

.info-row label {
    margin-left: auto;
    padding-right: 3px;
    line-height: 22px;
}

.info-row .combo {
    width: 118px;
}

.combo {
    position: relative;
    height: 23px;
}

.combo::after {
    content: "";
    position: absolute;
    top: 2px;
    right: 2px;
    bottom: 2px;
    width: 19px;
    border: 1px solid #fff;
    border-right-color: #777;
    border-bottom-color: #777;
    background: conic-gradient(from -45deg at 50% 100%, #000 90deg, transparent 0) center / 9px 5px no-repeat, #f0f0f0;
    background: linear-gradient(45deg, transparent 50%, #000 50%) 4px center / 5px 5px no-repeat, linear-gradient(-45deg, transparent 50%, #000 50%) 8px center / 5px 5px no-repeat, #f0f0f0;
    pointer-events: none;
}

.combo select {
    width: 100%;
    height: 100%;
    padding: 0 3px;
    border: 2px solid #777;
    border-right-color: #eee;
    border-bottom-color: #eee;
    border-radius: 0;
    background: #fff;
    color: #111;
    font: 12px "Noto Sans", "Noto Sans CJK KR", sans-serif;
    appearance: none;
}

.material {
    display: flex;
    flex: none;
    align-items: flex-start;
    height: 93px;
    padding: 2px 2px 0;
    border-bottom: 1px solid #a5a5a5;
}

.material-lg {
    width: 77px;
    height: 87px;
}

.material input {
    flex: 1;
    min-width: 0;
    height: 23px;
    margin: 0 3px;
    padding: 0 2px;
    border: 2px solid #888;
    border-right-color: #fff;
    border-bottom-color: #fff;
    background: #f0f0f0;
    color: #888;
    font: 12px/18px "Noto Sans CJK KR", sans-serif;
}

.material-side {
    display: flex;
    flex-direction: column;
    align-items: center;
    gap: 7px;
    width: 26px;
    padding-top: 4px;
}

.material-side .add {
    width: 22px;
    height: 24px;
}

.thumb {
    width: 26px;
    height: 26px;
}

.tabs {
    display: flex;
    flex: none;
    align-items: flex-end;
    height: 31px;
}

.tab {
    width: 47px;
    height: 20px;
    padding-right: 14px;
    border-top: 1px solid #fff;
    border-right: 2px solid #777;
    font-size: 12px;
    line-height: 18px;
}

.tab.current {
    width: 51px;
    height: 22px;
}

.dropper {
    width: 20px;
    height: 20px;
    margin: 0 5px 5px auto;
}

.nav-row {
    display: flex;
    flex: none;
    align-items: center;
    height: 36px;
    padding: 0 6px 0 9px;
    border-bottom: 1px solid #a5a5a5;
}

.nav-row svg {
    display: block;
    width: 16px;
    height: 16px;
}

.nav-row button {
    margin-right: 11px;
}

.nav-row .home {
    margin-right: 6px;
}

.nav-row .home svg {
    width: 20px;
    height: 20px;
}

.nav-row .combo {
    flex: 1;
    height: 26px;
    margin-top: 3px;
}

.nav-row .detail {
    margin: 0 0 0 8px;
}

.underlined::before {
    content: "";
    position: absolute;
    right: 24px;
    bottom: 2px;
    left: 5px;
    z-index: 1;
    border-bottom: 1px solid #000;
}

.list {
    display: flex;
    overflow: hidden;
    background: #fff;
}

.grid {
    display: grid;
    flex: 1;
    align-content: start;
    grid-template-columns: repeat(3, 62px);
    grid-auto-rows: 62px;
    gap: 2px;
    padding: 2px 3px;
}

.grid button {
    padding: 1px;
    border: 1px solid #999;
    background-clip: content-box;
}

.swatches {
    flex: none;
    height: 382px;
}

.folders {
    flex: 1;
}

.folders svg {
    display: block;
    width: 36px;
    height: 30px;
    margin: -6px auto 0;
}

.c1 { background-color: #fccfcf; }
.c2 { background-color: #fa9c9c; }
.c3 { background-color: #f56767; }
.c4 { background-color: #f33636; }
.c5 { background-color: #ed0404; }
.c6 { background-color: #cb0003; }
.c7 { background-color: #990003; }
.c8 { background-color: #660003; }
.c9 { background-color: #fddbcf; }
.c10 { background-color: #fab39b; }
.c11 { background-color: #f98f67; }
.c12 { background-color: #f66a35; }
.c13 { background-color: #f04204; }
.c14 { background-color: #cd3407; }
.c15 { background-color: #982706; }
.c16 { background-color: #661a03; }
.c17 { background-color: #fee7cf; }
.c18 { background-color: #fccf9b; }

.scroll {
    display: flex;
    flex-direction: column;
    align-items: center;
    width: 20px;
    background: #f0f0f0;
}

.scroll.outer {
    width: 21px;
}

.scroll svg {
    flex: none;
    width: 12px;
    height: 21px;
}

.scroll span {
    width: 19px;
    height: 21px;
    background: #cdcdcd;
}

.scroll .end {
    margin-top: auto;
}

.sub-head {
    flex: none;
    height: 32px;
    padding: 8px 5px 0;
    border-top: 2px solid #777;
    border-bottom: 1px solid #a5a5a5;
    background: linear-gradient(#f0f0f0 4px, #a5a5a5 4px, #a5a5a5 5px, #e5e3e5 5px);
    font-size: 12px;
    line-height: 17px;
}

/* Caption strip */
.caption {
    position: absolute;
    bottom: 0;
    left: 0;
    margin: 0;
    padding: 0 86px 5px 92px;
    background: rgba(50, 50, 50, 0.55);
    color: #f0f0f0;
    font-size: 46px;
    font-weight: 300;
    line-height: 67px;
    white-space: nowrap;
}

/* Status bar */
.status {
    display: flex;
    align-items: center;
    gap: 15px;
    height: 27px;
    padding: 5px 0 0 6px;
    background: #f0f0f0;
}

.status svg {
    width: 20px;
    height: 20px;
}

.hint {
    flex: 1;
    margin-left: -2px;
    padding-left: 10px;
    border-left: 1px solid #888;
    font-size: 17px;
    line-height: 18px;
}

.unit {
    padding-left: 10px;
    border-left: 1px solid #888;
    font-size: 17px;
    line-height: 18px;
}

.status input {
    align-self: flex-end;
    width: 250px;
    height: 22px;
    margin: 0 5px 0 -5px;
    border: 1px solid #a9bccd;
    border-bottom: 0;
    background: #f0f0f0;
}
```
